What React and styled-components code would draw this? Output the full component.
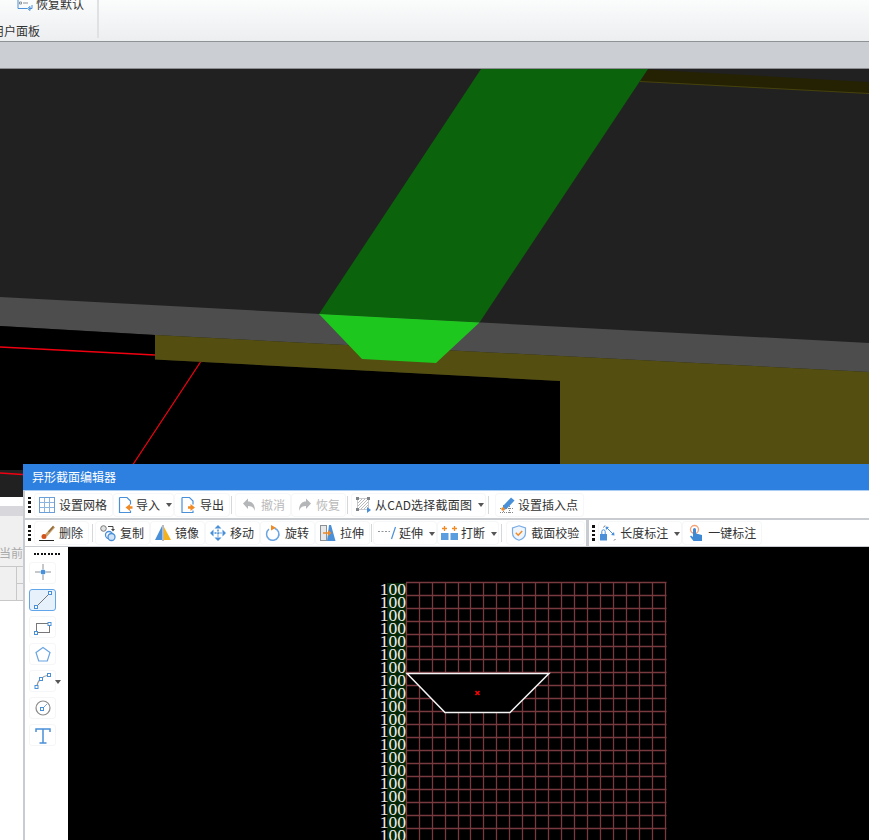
import React from 'react';
import styled, { createGlobalStyle } from 'styled-components';

const BLUE = '#4a90d9';
const ORANGE = '#f08a24';
const GREY = '#8c9196';

const GlobalStyle = createGlobalStyle`
  html, body {
    margin: 0;
    padding: 0;
    background: #222;
  }
  body {
    font-family: "Noto Sans CJK SC", "Liberation Sans", sans-serif;
    font-size: 12px;
    color: #333;
  }
`;

const Page = styled.div`
  position: relative;
  width: 869px;
  height: 840px;
  overflow: hidden;
  display: flex;
  flex-direction: column;
`;

const Ribbon = styled.div`
  height: 41px;
  flex: none;
  display: flex;
  overflow: hidden;
  background: linear-gradient(#fbfcfc, #eceef0);
  border-bottom: 1px solid #8f9295;
`;

const RibbonGroup = styled.div`
  width: 97px;
  height: 38px;
  border-right: 2px solid #dfe1e3;
  display: flex;
  flex-direction: column;
  justify-content: space-between;
`;

const RibbonItem = styled.div`
  display: flex;
  align-items: center;
  gap: 3px;
  height: 16px;
  margin: -4px 0 0 17px;
  line-height: 16px;
`;

const RibbonLabel = styled.div`
  line-height: 16px;
  margin: 0 0 -1px -8px;
`;

const TabBand = styled.div`
  height: 26px;
  flex: none;
  background: #cbced2;
  border-bottom: 1px solid #8a8c90;
`;

const Scene = styled.div`
  flex: 1;
  min-height: 0;
  background: #212121;

  svg {
    display: block;
  }
`;

const BackWindow = styled.div`
  position: absolute;
  left: 0;
  top: 497px;
  bottom: 0;
  width: 23px;
  overflow: hidden;
  background: #fff;
  display: flex;
  flex-direction: column;
`;

const BackTitle = styled.div`
  height: 9px;
`;

const BackBar = styled.div`
  height: 10px;
  background: #d8d8dc;
`;

const BackForm = styled.div`
  height: 51px;
  box-sizing: border-box;
  background: #f0f0f0;
  border-bottom: 1px solid #c8c8c8;
  padding-top: 28px;
  color: #aaa;
  line-height: 18px;
  white-space: nowrap;
  text-indent: -1px;
`;

const BackGrid = styled.div`
  height: 34px;
  box-sizing: border-box;
  background: #f0f0f0;
  border-bottom: 1px solid #c8c8c8;
  display: grid;
  grid-template-columns: 17px 1fr;
  grid-template-rows: 17px 1fr;
`;

const BackCell = styled.div`
  border-right: ${p => (p.$first ? '1px solid #c8c8c8' : 'none')};
  border-bottom: ${p => (p.$line ? '1px solid #c8c8c8' : 'none')};
  grid-row: ${p => (p.$first ? '1 / 3' : 'auto')};
`;

const Dialog = styled.div`
  position: absolute;
  left: 23px;
  top: 464px;
  right: 0;
  bottom: 0;
  display: flex;
  flex-direction: column;
  background: #c8cbd0;
`;

const TitleBar = styled.div`
  height: 27px;
  flex: none;
  box-sizing: border-box;
  padding-left: 9px;
  background: #2d7fe0;
  border-bottom: 1px solid #a9cdf3;
  color: #fff;
  line-height: 25px;
`;

const Toolbar = styled.div`
  height: ${p => p.$h}px;
  flex: none;
  margin: 0 0 2px 2px;
  background: #fff;
  display: flex;
  align-items: center;
  gap: 2px;
  padding-left: 3px;
`;

const Grip = styled.div`
  width: 3px;
  height: 16px;
  flex: none;
  margin-right: 2px;
  background: repeating-linear-gradient(#111 0 2.5px, transparent 2.5px 4.5px);
`;

const ToolButton = styled.div`
  display: flex;
  align-items: center;
  height: 22px;
  box-sizing: border-box;
  padding: 0 ${p => (p.$caret ? 1 : 5)}px 0 ${p => p.$pl ?? 4}px;
  gap: 4px;
  border-radius: 3px;
  box-shadow: 0 0 0 1px #f6f7f8;
  color: ${p => (p.$off ? '#b9b9b9' : '#333')};
  letter-spacing: ${p => (p.$wide ? '0.2px' : 'normal')};
  white-space: nowrap;
  line-height: 18px;
`;

const IconSlot = styled.span`
  width: ${p => p.$w}px;
  height: 16px;
  flex: none;
  display: block;

  svg {
    display: block;
  }
`;

const Caret = styled.span`
  width: 0;
  height: 0;
  flex: none;
  margin: 1px 0 0 2px;
  border: solid transparent;
  border-width: 4px 3.5px 0;
  border-top-color: #555;
`;

const Divider = styled.span`
  width: 1px;
  height: 18px;
  flex: none;
  margin: 0 ${p => p.$r ?? 1}px 0 ${p => p.$l ?? 1}px;
  background: #d5d7da;
`;

const Splitter = styled.span`
  width: 3px;
  height: 26px;
  flex: none;
  background: #c8cbd0;
  margin-right: 1px;
`;

const Workspace = styled.div`
  flex: 1;
  min-height: 0;
  margin: -1px 0 0 2px;
  display: flex;
`;

const ToolPanel = styled.div`
  width: 43px;
  flex: none;
  box-sizing: border-box;
  background: #fff;
  padding: 6px 0 0 4px;
  display: flex;
  flex-direction: column;
  gap: 5px;
`;

const PanelGrip = styled.div`
  width: 27px;
  height: 2px;
  margin: 0 0 2px 5px;
  background: repeating-linear-gradient(90deg, #111 0 2px, transparent 2px 3.5px);
`;

const ToolTile = styled.div`
  position: relative;
  width: 27px;
  height: 22px;
  box-sizing: border-box;
  border-radius: 3px;
  border: 1px solid ${p => (p.$active ? '#62a6ea' : '#f5f6f7')};
  background: ${p => (p.$active ? '#e6f1fb' : '#fff')};
  display: flex;
  align-items: center;
  justify-content: center;
`;

const TileCaret = styled(Caret)`
  position: absolute;
  left: 25px;
  top: 9px;
  margin: 0;
`;

const Canvas = styled.div`
  flex: 1;
  min-width: 0;
  background: #000;

  svg {
    display: block;
  }
`;

const Ico = ({ w = 16, children }) => (
  <IconSlot $w={w}>
    <svg width={w} height="16" viewBox={`0 0 ${w} 16`} fill="none" overflow="visible">{children}</svg>
  </IconSlot>
);

const Doc = () => (
  <path d="M1.500 .5h7.500l3.500 3.500v3.500M12.500 13.500v2h-11v-15" stroke={BLUE} strokeWidth="1.200" />
);

const icons = {
  grid: (
    <Ico>
      <rect x="0.500" y="0.500" width="15" height="15" stroke="#6a9fd8" />
      <path d="M5.500 1v14M10.500 1v14M1 5.500h14M1 10.500h14" stroke="#8db4df" />
    </Ico>
  ),
  importFile: (
    <Ico w={14}>
      <Doc />
      <path d="M7.500 10.500l4.500-3.500v2.200h2.500v2.600H12v2.200z" fill={ORANGE} />
    </Ico>
  ),
  exportFile: (
    <Ico w={17}>
      <g transform="translate(1.500 0)">
        <Doc />
      </g>
      <path d="M16 10.500L11.500 7v2.200H9v2.600h2.500v2.200z" fill={ORANGE} />
    </Ico>
  ),
  undo: (
    <Ico w={17}>
      <path d="M3 6.500L8 1.500v3c4 0 7 2.500 7 9.500-1.500-4-3.500-5-7-5v3z" fill="#b4b6b8" />
    </Ico>
  ),
  redo: (
    <Ico>
      <path d="M15 6.500L10 1.500v3c-4 0-7 2.500-7 9.500 1.500-4 3.500-5 7-5v3z" fill="#b4b6b8" />
    </Ico>
  ),
  cad: (
    <Ico w={15}>
      <rect x="1.500" y="1.500" width="11" height="11" stroke="#8c9196" strokeDasharray="1 1" />
      <path d="M2 6l4-4M2 9l7-7M2 12l10-10M5 12l7-7M8 12l4-4" stroke="#a4a8ac" strokeWidth=".8" />
      <path d="M0 0h3v3H0zM11 0h3v3h-3zM0 11h3v3H0z" fill="#7f8488" />
      <path d="M11 10l4 3-4 3z" fill={BLUE} />
    </Ico>
  ),
  insert: (
    <Ico w={14}>
      <path d="M0 11.500h14M0 15.500h14M3.500 8v8M9.500 9v7" stroke="#888" strokeDasharray="1 1" />
      <path d="M3 9l8-8.500 3.500 3-8 8.500-3.500 1z" fill={BLUE} />
      <circle cx="3" cy="12" r="1.800" fill={ORANGE} />
    </Ico>
  ),
  erase: (
    <Ico>
      <path d="M6 9.500L14 .5l2 2-8 9z" fill="#c9a06a" />
      <path d="M9 6.500l5-5.500 1 1-5 5.500z" fill="#8a6a3e" />
      <circle cx="5" cy="11.500" r="2.500" fill="#d2531c" />
      <path d="M0 15.500h15" stroke="#222" />
    </Ico>
  ),
  copy: (
    <Ico>
      <circle cx="3.500" cy="3.500" r="2.800" fill="#dfe1e3" stroke="#777" />
      <circle cx="9" cy="10" r="3.500" stroke={BLUE} strokeWidth="1.300" />
      <circle cx="11.500" cy="12" r="3.500" fill="#cfe2f6" stroke={BLUE} strokeWidth="1.300" />
      <path d="M8 1.500h5v3" stroke="#444" />
      <path d="M11 4h4l-2 2.500z" fill="#444" />
    </Ico>
  ),
  mirror: (
    <Ico>
      <path d="M7 1v14H0z" fill={BLUE} />
      <path d="M8 0v16" stroke="#777" />
      <path d="M9 2v13h7z" fill="#f4b21c" />
    </Ico>
  ),
  move: (
    <Ico>
      <path d="M8 0l3.500 3.500h-7zM8 16l-3.500-3.500h7zM0 8l3.500-3.500v7zM16 8l-3.500 3.500v-7z" fill={BLUE} />
      <path d="M8 4.500v7M4.500 8h7" stroke={BLUE} strokeWidth="1.500" strokeDasharray="2 1" />
    </Ico>
  ),
  rotate: (
    <Ico>
      <path d="M9.500 3.200a6.200 6.200 0 1 1-5.500 1" stroke="#6aa5e2" strokeWidth="1.500" />
      <path d="M6 0l5 2.800L6 5.500z" fill={ORANGE} />
    </Ico>
  ),
  stretch: (
    <Ico>
      <rect x="0.500" y="0.500" width="6" height="15" fill="#e7e8ea" stroke="#8c9196" />
      <path d="M9 0h2l4.500 16H7z" fill={BLUE} />
      <path d="M3 8h6" stroke={ORANGE} strokeWidth="1.500" />
      <path d="M8 5l3.500 3L8 11z" fill={ORANGE} />
    </Ico>
  ),
  extend: (
    <Ico w={17}>
      <path d="M0 6.500h12" stroke="#8f9499" strokeDasharray="2 1.500" />
      <path d="M13.500 14l4-12" stroke={BLUE} strokeWidth="1.200" />
    </Ico>
  ),
  split: (
    <Ico>
      <rect x="0" y="8" width="7.500" height="7" fill="#5a9ee0" />
      <rect x="9.500" y="8" width="7.500" height="7" fill="#5a9ee0" />
      <path d="M3.500 1v5M1 3.500h5M13.500 1v5M11 3.500h5" stroke={ORANGE} strokeWidth="1.300" />
    </Ico>
  ),
  verify: (
    <Ico>
      <path d="M8 .8l6.500 2.200v5c0 3.800-3 6-6.500 7.200C4.500 14 1.500 11.800 1.500 8V3z" fill="#eef5fc" stroke="#78ace4" strokeWidth="1.200" />
      <path d="M4.800 7.800l2.400 2.500 4-4.300" stroke={ORANGE} strokeWidth="1.400" />
    </Ico>
  ),
  dimension: (
    <Ico>
      <rect x="0" y="9" width="7" height="6.500" fill={BLUE} />
      <path d="M1.800 9V6.500a1.700 1.700 0 0 1 3.400 0V9" stroke={BLUE} />
      <path d="M5 .5L3.500 2.500M15.500 14l-1.500 1.500" stroke="#777" />
      <path d="M7 3l6 6" stroke={BLUE} />
      <path d="M5.500 1.500l3.500 .5-3 3zM14.500 10.500l-.5-3.500-3 3z" fill={BLUE} />
    </Ico>
  ),
  oneKey: (
    <Ico>
      <g transform="translate(1 0)">
        <circle cx="5.500" cy="4.500" r="4" stroke="#f4a27a" strokeWidth="1.300" />
        <path d="M4 4.500a1.500 1.500 0 0 1 3 0V8.500l6 1.500v6H4.500L1 11.500l1-1 2 1.500z" fill="#3f88d4" />
      </g>
    </Ico>
  ),
};

const Tool = ({ icon, text, caret, off, pl, wide }) => (
  <ToolButton $caret={caret} $off={off} $pl={pl} $wide={wide}>
    {icons[icon]}
    {text}
    {caret && <Caret />}
  </ToolButton>
);

const Handle = ({ x, y }) => (
  <rect x={x - 1.500} y={y - 1.500} width="3" height="3" fill="#fff" stroke={BLUE} />
);

const Tile = ({ active, caret, children }) => (
  <ToolTile $active={active}>
    <svg width="20" height="20" viewBox="0 0 20 20" fill="none">{children}</svg>
    {caret && <TileCaret />}
  </ToolTile>
);

const GRID_X0 = 406.7;
const GRID_Y0 = 582.7;
const STEP = 12.95;
const COLS = 20;
const ROWS = 21;

const SectionGrid = () => {
  const right = Math.round(GRID_X0 + COLS * STEP) + 0.5;
  const bottom = Math.round(GRID_Y0 + ROWS * STEP);
  return (
    <svg width="801" height="293" viewBox="68 547 801 293">
      <rect x="387" y="583" width="20" height="257" fill="#062806" />
      <g stroke="#78393f" strokeWidth="1.300">
        {Array.from({ length: COLS + 1 }, (_, i) => {
          const x = Math.round(GRID_X0 + i * STEP) - 0.5;
          return <line key={i} x1={x} x2={x} y1={583} y2={bottom} />;
        })}
        {Array.from({ length: ROWS + 1 }, (_, i) => {
          const y = Math.round(GRID_Y0 + i * STEP) - 0.5;
          return <line key={i} x1={406} x2={right} y1={y} y2={y} />;
        })}
      </g>
      <g fill="#eee" fontFamily='"Liberation Serif", serif' fontSize="17.500" textAnchor="end">
        {Array.from({ length: 20 }, (_, i) => (
          <text key={i} x="406" y={595 + i * STEP}>100</text>
        ))}
      </g>
      <path d="M407 673.500H549L510 712.500H445Z" stroke="#f4f4f4" strokeWidth="1.500" />
      <path d="M475.500 691l4 4M479.500 691l-4 4" stroke="#f00" strokeWidth="1.500" />
    </svg>
  );
};

export default function App() {
  return (
    <Page>
      <GlobalStyle />
      <Ribbon>
        <RibbonGroup>
          <RibbonItem>
            <svg width="16" height="16" viewBox="0 0 16 16" fill="none">
              <path d="M1 0v12.500h9" stroke={BLUE} />
              <path d="M2.500 1h2v2h-2zM2.500 6h2v2h-2z" stroke="#8c9196" />
              <path d="M6 2h6M6 7h5" stroke="#8c9196" />
              <path d="M15 9v3.500h-3M13 10.500L10.500 12.500l2.500 2z" stroke={BLUE} />
            </svg>
            恢复默认
          </RibbonItem>
          <RibbonLabel>用户面板</RibbonLabel>
        </RibbonGroup>
      </Ribbon>
      <TabBand />
      <Scene>
        <svg width="869" height="771" viewBox="0 69 869 771">
          <rect x="0" y="69" width="869" height="771" fill="#212121" />
          <path d="M648 69.500L869 82V93.500L640 81.500Z" fill="#252204" />
          <path d="M640 81.500L869 93.500" stroke="#46420c" />
          <path d="M0 297L869 343V372L155 335 0 326Z" fill="#4d4d4d" />
          <path d="M0 326L155 335V359.500L560 381V470H0Z" fill="#000" />
          <path d="M155 335L869 372V470H560V381L155 359.500Z" fill="#544f10" />
          <path d="M481 69H648L479.500 322.500 319 314Z" fill="#0b640b" />
          <path d="M319 314L479.500 322.500 436 363 362 359Z" fill="#1ec71e" />
          <path d="M0 347L155 355M200.500 362L132 466M0 473L30 475" stroke="#f00010" strokeWidth="1.300" />
        </svg>
      </Scene>
      <BackWindow>
        <BackTitle />
        <BackBar />
        <BackForm>当前</BackForm>
        <BackGrid>
          <BackCell $first />
          <BackCell $line />
          <BackCell />
        </BackGrid>
      </BackWindow>
      <Dialog>
        <TitleBar>异形截面编辑器</TitleBar>
        <Toolbar $h={27}>
          <Grip />
          <Tool icon="grid" text="设置网格" />
          <Tool icon="importFile" text="导入" caret />
          <Tool icon="exportFile" text="导出" />
          <Divider $l={0} $r={2} />
          <Tool icon="undo" text="撤消" off />
          <Tool icon="redo" text="恢复" off />
          <Divider $l={0} $r={2} />
          <Tool icon="cad" text="从CAD选择截面图" caret wide />
          <Divider $l={1} $r={5} />
          <Tool icon="insert" text="设置插入点" />
        </Toolbar>
        <Toolbar $h={26}>
          <Grip />
          <Tool icon="erase" text="删除" />
          <Divider $l={2} $r={1} />
          <Tool icon="copy" text="复制" />
          <Tool icon="mirror" text="镜像" />
          <Tool icon="move" text="移动" />
          <Tool icon="rotate" text="旋转" />
          <Tool icon="stretch" text="拉伸" />
          <Divider $l={0} $r={0} />
          <Tool icon="extend" text="延伸" caret />
          <Tool icon="split" text="打断" caret pl={3} />
          <Divider $l={1} $r={3} />
          <Tool icon="verify" text="截面校验" />
          <Splitter />
          <Grip />
          <Tool icon="dimension" text="长度标注" caret pl={1} />
          <Tool icon="oneKey" text="一键标注" pl={5} />
        </Toolbar>
        <Workspace>
          <ToolPanel>
            <PanelGrip />
            <Tile>
              <g transform="translate(0 -1)">
                <path d="M10 2v5M10 13v5M2 10h5M13 10h5" stroke={GREY} />
                <circle cx="10" cy="10" r="2.500" fill={BLUE} />
              </g>
            </Tile>
            <Tile active>
              <path d="M3 17L17 3" stroke="#777" />
              <Handle x={3} y={17} />
              <Handle x={17} y={3} />
            </Tile>
            <Tile>
              <g transform="translate(0 2)">
                <rect x="3.500" y="4.500" width="13" height="9" stroke="#777" />
                <Handle x={3} y={14} />
                <Handle x={16.500} y={5} />
              </g>
            </Tile>
            <Tile>
              <g transform="translate(0 1)">
                <path d="M10 2.500l7 5-2.700 8.500H5.700L3 7.500z" stroke="#6aa5e2" strokeWidth="1.200" />
              </g>
            </Tile>
            <Tile caret>
              <path d="M4 16C4 10 9 5 16 4" stroke="#9a9a9a" strokeWidth="1.200" />
              <Handle x={3.500} y={16} />
              <Handle x={8} y={8} />
              <Handle x={16} y={4} />
            </Tile>
            <Tile>
              <circle cx="10" cy="10" r="7" stroke="#8a8a8a" strokeWidth="1.200" />
              <path d="M10 10l4-4" stroke="#7aa8dc" />
              <Handle x={9} y={11} />
            </Tile>
            <Tile>
              <g transform="translate(0 1)">
                <path d="M3 6V3h14v3M3.500 3h13M10 3v14M6.500 17h7" stroke={BLUE} strokeWidth="1.500" />
              </g>
            </Tile>
          </ToolPanel>
          <Canvas>
            <SectionGrid />
          </Canvas>
        </Workspace>
      </Dialog>
    </Page>
  );
}
